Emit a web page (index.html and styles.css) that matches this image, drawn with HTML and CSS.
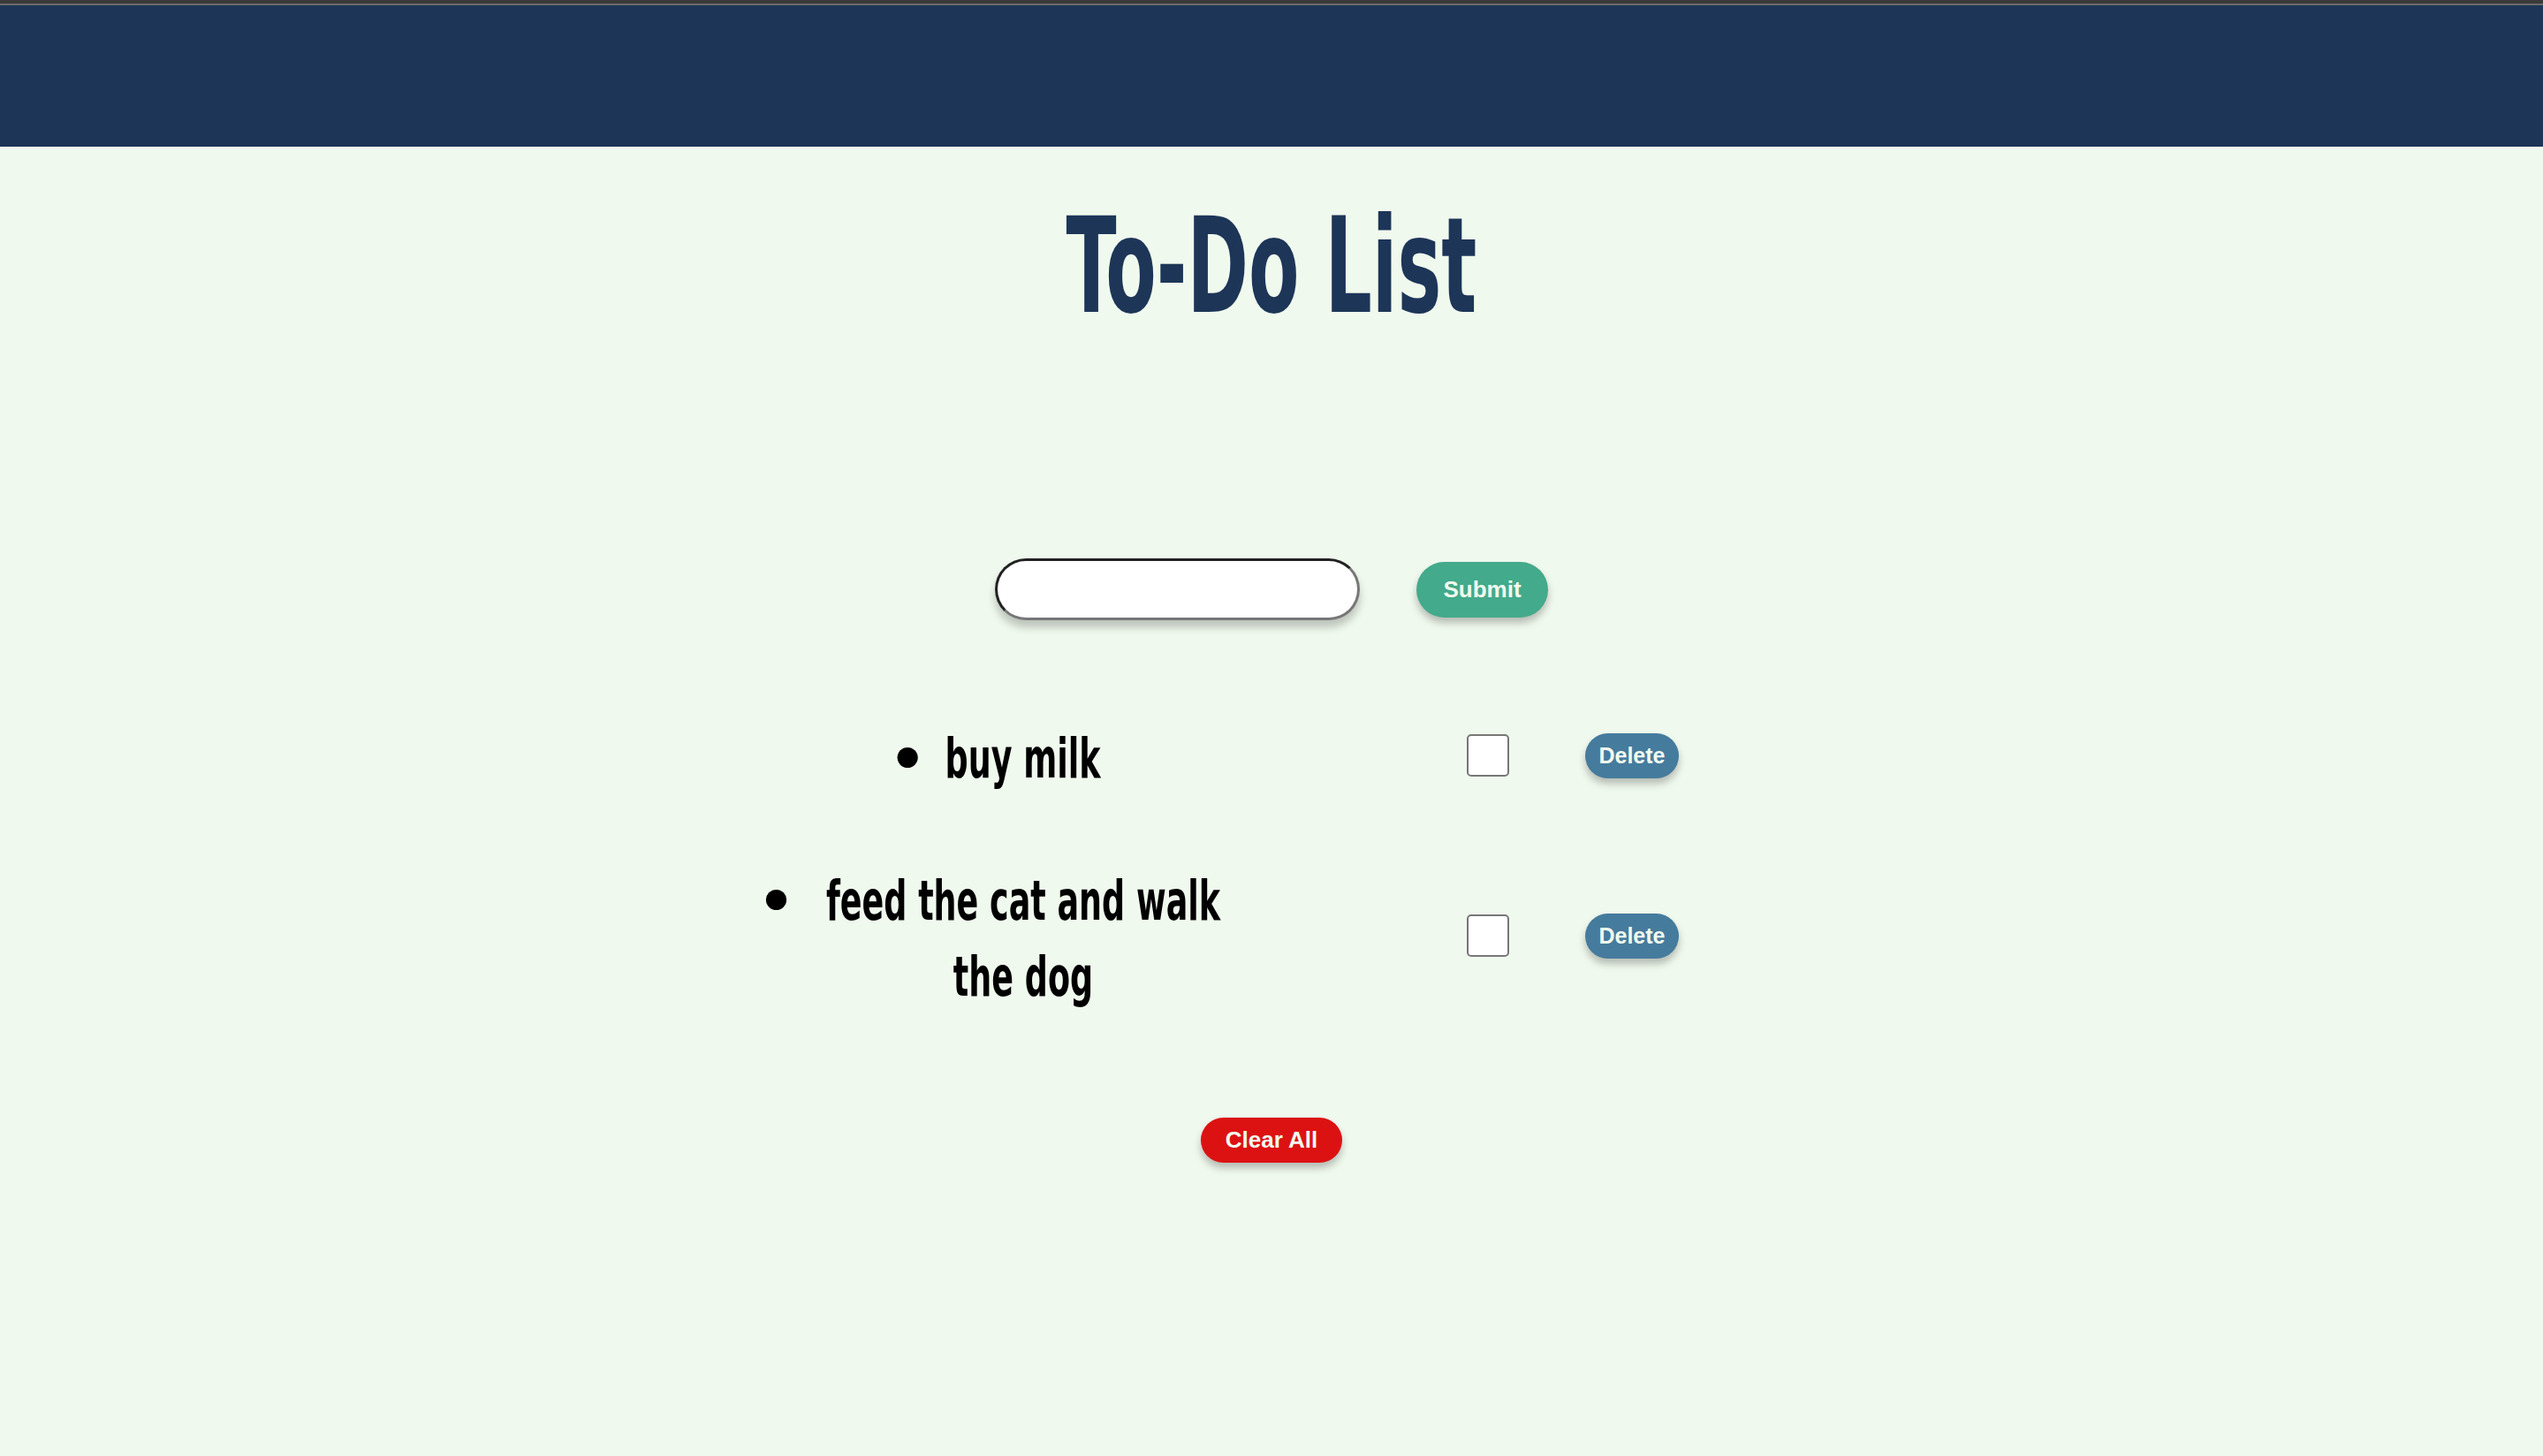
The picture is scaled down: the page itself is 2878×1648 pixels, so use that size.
FILE: index.html
```html
<!DOCTYPE html>
<html lang="en">
<head>
<meta charset="utf-8">
<title>To-Do List</title>
<link rel="stylesheet" href="styles.css">
</head>
<body>
<header class="topbar"></header>
<main class="page">
  <h1 class="title">To-Do List</h1>
  <form class="entry" onsubmit="return false;">
    <input class="entry-input" type="text" aria-label="New task">
    <button class="btn btn-submit" type="submit">Submit</button>
  </form>
  <ul class="list">
    <li class="item">
      <div class="item-text">buy milk</div>
      <input class="check" type="checkbox" aria-label="done">
      <button class="btn btn-delete" type="button">Delete</button>
    </li>
    <li class="item">
      <div class="item-text">feed the cat and walk the dog</div>
      <input class="check" type="checkbox" aria-label="done">
      <button class="btn btn-delete" type="button">Delete</button>
    </li>
  </ul>
  <button class="btn btn-clear" type="button">Clear All</button>
</main>
</body>
</html>
```

FILE: styles.css
```css
* { box-sizing: border-box; }

body {
  margin: 0;
  min-height: 100vh;
  background: #F0F9EE;
  font-family: "Liberation Sans", Arial, sans-serif;
}

.topbar {
  height: 166px;
  background: #1D3557;
  border-top: 4px solid #393939;
  box-shadow: inset 0 2px 0 #6b6b6b;
}

.page {
  display: flex;
  flex-direction: column;
  align-items: center;
}

.title {
  margin: 60px 0 0;
  font-family: "DejaVu Sans Condensed", "DejaVu Sans", sans-serif;
  font-stretch: condensed;
  font-weight: 700;
  font-size: 150px;
  line-height: 150px;
  color: #1D3557;
  transform: scaleX(0.62);
}

.entry {
  display: flex;
  align-items: center;
  gap: 64px;
  margin: 256px 0 0;
}

.entry-input {
  width: 413px;
  height: 70px;
  border: 3px solid;
  border-color: #222 #777 #777 #222;
  border-radius: 35px;
  background: #fff;
  box-shadow: 0 8px 10px rgba(0, 0, 0, 0.22);
  font-size: 24px;
  padding: 0 22px;
  outline: none;
}

.btn {
  border: none;
  padding: 0;
  display: inline-flex;
  align-items: center;
  justify-content: center;
  font-family: "Liberation Sans", Arial, sans-serif;
  font-weight: 700;
  font-size: 26px;
  color: #F1FAEE;
  box-shadow: 0 6px 8px rgba(0, 0, 0, 0.25);
  cursor: pointer;
}

.btn-submit {
  width: 149px;
  height: 63px;
  border-radius: 32px;
  background: #43AA8B;
}

.btn-delete {
  grid-column: 5;
  width: 106px;
  height: 51px;
  border-radius: 26px;
  background: #457B9D;
  font-size: 25px;
}

.btn-clear {
  width: 160px;
  height: 51px;
  border-radius: 26px;
  background: #DC1212;
  margin-top: 120px;
}

.list {
  list-style: none;
  margin: 110px 0 0;
  padding: 0 188px 0 0;
  width: 1298px;
  display: flex;
  flex-direction: column;
  gap: 75px;
}

.item {
  display: grid;
  grid-template-columns: 736px 134px 48px 86px 106px;
  align-items: center;
}

.item-text {
  grid-column: 1;
  justify-self: center;
  position: relative;
  max-width: 736px;
  text-align: center;
  font-family: "DejaVu Sans Condensed", "DejaVu Sans", sans-serif;
  font-stretch: condensed;
  font-weight: 700;
  font-size: 63px;
  line-height: 86px;
  color: #000;
  transform: translateY(4px) scaleX(0.644);
}

.item-text::before {
  content: "";
  position: absolute;
  left: -84px;
  top: 30px;
  width: 36px;
  height: 23px;
  border-radius: 50%;
  background: #000;
}

.check {
  grid-column: 3;
  appearance: none;
  -webkit-appearance: none;
  width: 48px;
  height: 48px;
  margin: 0;
  background: #fff;
  border: 2px solid #777;
  border-radius: 5px;
}
```
